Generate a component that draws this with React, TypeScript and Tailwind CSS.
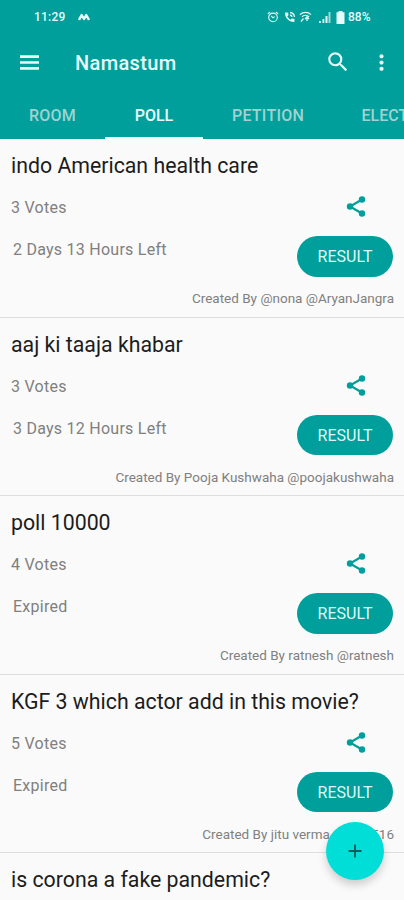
import { MdAdd, MdMoreVert, MdSearch } from 'react-icons/md'

interface Poll {
  title: string
  votes: number
  status: string
  author: string
}

const polls: Poll[] = [
  { title: 'indo American health care', votes: 3, status: '2 Days 13 Hours Left', author: '@nona @AryanJangra' },
  { title: 'aaj ki taaja khabar', votes: 3, status: '3 Days 12 Hours Left', author: 'Pooja Kushwaha @poojakushwaha' },
  { title: 'poll 10000', votes: 4, status: 'Expired', author: 'ratnesh @ratnesh' },
  { title: 'KGF 3 which actor add in this movie?', votes: 5, status: 'Expired', author: 'jitu verma @jitu7516' },
]

export default function App() {
  return (
    <div className="relative flex h-[900px] w-[404px] flex-col overflow-hidden bg-[#fafafa] font-['Roboto',sans-serif]">
      <header className="shrink-0 bg-[#009f9b] text-[#e6fbfa]">
        <StatusBar />
        <div className="flex h-[58px] items-center pr-2.5 pl-[20px]">
          <MenuIcon />
          <h1 className="ml-[36px] flex-1 text-[20px] font-medium tracking-[0.35px]">Namastum</h1>
          <MdSearch size={26} className="-mt-0.5" />
          <MdMoreVert size={25} className="-mt-0.5 ml-[18px]" />
        </div>
        <Tabs />
      </header>

      <main className="min-h-0 flex-1 overflow-hidden">
        {polls.map((poll) => (
          <PollItem key={poll.title} poll={poll} />
        ))}
        {/* next poll, only its title is in view */}
        <PollTitle>is corona a fake pandemic?</PollTitle>
      </main>

      <button
        aria-label="Add poll"
        className="absolute top-[821.5px] left-[326px] flex size-[58px] items-center justify-center rounded-full bg-[#00ded7] text-[#075e5b] shadow-[0_5px_8px_rgba(0,0,0,0.18)]"
      >
        <MdAdd size={22} />
      </button>
    </div>
  )
}

function StatusBar() {
  return (
    <div className="flex h-[34px] items-center pl-[34px] text-[12px] font-medium">
      <span className="w-[44px] tracking-[0.2px]">11:29</span>
      <svg width="12" height="8" viewBox="0 0 12 8" fill="none" stroke="currentColor" strokeWidth="2.4">
        <path d="M1 7 3.6 2 6 6 8.2 2 11 7" strokeLinejoin="round" />
      </svg>
      <div className="ml-[177px] flex items-center">
        {/* alarm */}
        <svg width="12" height="12" viewBox="0 0 12 12" fill="none" stroke="currentColor" strokeWidth="1.1">
          <circle cx="6" cy="6.4" r="4.3" />
          <path d="M.8 3 3 1M11.2 3 9 1M4.2 5 6 6.8 7.8 5.6" />
        </svg>
        {/* wifi call */}
        <svg width="12" height="12" viewBox="0 0 24 24" fill="currentColor" className="ml-[5px]">
          <path d="M20 15.5c-1.2 0-2.4-.2-3.6-.6-.3-.1-.7 0-1 .2l-2.2 2.2c-2.8-1.4-5.1-3.8-6.6-6.6l2.2-2.2c.3-.3.4-.7.2-1C8.7 6.4 8.5 5.2 8.5 4c0-.6-.4-1-1-1H3c-.6 0-1 .4-1 1 0 9.9 8.1 18 18 18 .6 0 1-.4 1-1v-4.5c0-.6-.4-1-1-1z" />
          <path d="M12 3a10 10 0 0 1 9 9M12 8a5 5 0 0 1 4 4" fill="none" stroke="currentColor" strokeWidth="2.6" />
        </svg>
        {/* wifi with traffic arrows */}
        <svg width="13" height="12" viewBox="0 0 13 12" fill="none" stroke="currentColor" strokeWidth="1.3" className="ml-[3px]">
          <path d="M1 3.6C4 .7 9 .7 12 3.6M3 5.8c2-1.9 5-1.9 7 0M4.5 7.5 2 10.5M8 6v4M6 8l2-2 2 2" />
        </svg>
        {/* signal */}
        <svg width="12" height="11" viewBox="0 0 12 11" fill="currentColor" className="ml-[7px]">
          <path d="M0 9h1.8v2H0zM3.5 7h1.8v4H3.5zM6.5 4h2v7h-2z" />
          <path d="M9.5 0h2v11h-2z" opacity=".65" />
        </svg>
        {/* battery */}
        <svg width="9" height="13" viewBox="0 0 9 13" fill="currentColor" className="ml-[5px]">
          <path d="M2.5 0h4v1.3h2V13h-8V1.3h2z" />
        </svg>
        <span className="ml-[3px]">88%</span>
      </div>
    </div>
  )
}

function MenuIcon() {
  return (
    <svg width="19" height="15" viewBox="0 0 19 15" stroke="currentColor" strokeWidth="2.6" className="-mt-0.5">
      <path d="M0 1.6h19M0 7.500h19M0 13.400h19" />
    </svg>
  )
}

function ShareIcon() {
  return (
    <svg width="20" height="21" viewBox="0 0 20 21" fill="#009f9b" className="mr-[27px]">
      <path d="M16 3.500 4 10.500l12 7" fill="none" stroke="#009f9b" strokeWidth="2.200" />
      <circle cx="16" cy="3.5" r="3.2" />
      <circle cx="4" cy="10.5" r="3.2" />
      <circle cx="16" cy="17.5" r="3.2" />
    </svg>
  )
}

function Tabs() {
  return (
    <nav className="flex h-[47px] overflow-hidden text-[16px] font-medium">
      <span className="flex w-[105px] shrink-0 items-center justify-center tracking-[0.2px] text-[#9fd3d1]">ROOM</span>
      <span className="flex w-[98px] shrink-0 items-center justify-center border-b-2 border-[#f2ffff] pt-0.5">POLL</span>
      <span className="flex w-[130px] shrink-0 items-center justify-center tracking-[0.25px] text-[#9fd3d1]">PETITION</span>
      <span className="flex shrink-0 items-center pl-[28.5px] text-[#9fd3d1]">ELECTION</span>
    </nav>
  )
}

function PollTitle({ children }: { children: string }) {
  return (
    <h2 className="px-[11px] pt-[11px] text-[21.3px] leading-8 whitespace-nowrap text-[#1c1c1c]">{children}</h2>
  )
}

function PollItem({ poll }: { poll: Poll }) {
  return (
    <article className="flex h-[178.5px] flex-col border-b border-[#dedede] text-[#808080]">
      <PollTitle>{poll.title}</PollTitle>
      <div className="flex justify-between px-[11px]">
        <div className="text-[16px] leading-6 tracking-[0.25px]">
          <p className="mt-[14px]">{poll.votes} Votes</p>
          <p className="mt-[18px] ml-0.5">{poll.status}</p>
        </div>
        <div className="mt-[14px] flex flex-col items-end">
          <ShareIcon />
          <button className="mt-[19px] h-[40.5px] w-[96px] rounded-full bg-[#009f9b] pt-0.5 text-[16px] text-[#dff8f7]">
            RESULT
          </button>
        </div>
      </div>
      <p className="mt-[11.5px] pr-[10px] text-right text-[13.5px] leading-5">Created By {poll.author}</p>
    </article>
  )
}
